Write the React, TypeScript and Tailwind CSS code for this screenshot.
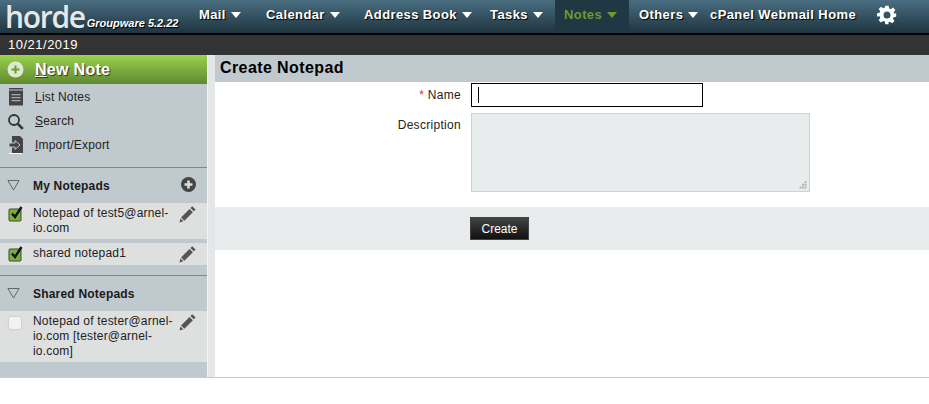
import React from "react";

const Caret = ({ className = "border-t-white" }: { className?: string }) => (
  <span className={`ml-[5px] inline-block w-0 h-0 border-x-[5.5px] border-x-transparent border-t-[6px] ${className}`} />
);

const NavItem = ({ label, width, active }: { label: string; width: string; active?: boolean }) => (
  <div
    className={`flex items-center h-full pb-[3px] ${width} ${active ? "bg-[#203843] pl-[9px] text-[#6a9a32]" : "text-white [text-shadow:1px_1px_1px_#000]"}`}
  >
    {label}
    <Caret className={active ? "border-t-[#6a9a32]" : "border-t-white"} />
  </div>
);

const Gear = () => (
  <svg width="20" height="20" viewBox="0 0 24 24" fill="#fff">
    <path
      fillRule="evenodd"
      d="M10 1h4l.6 3.2 1.9.8 2.7-1.9 2.8 2.8-1.9 2.7.8 1.9L23 10v4l-3.1.6-.8 1.9 1.9 2.7-2.8 2.8-2.7-1.9-1.9.8L13.9 23h-4l-.5-3.1-1.9-.8-2.7 1.9L2 18.2l1.9-2.7-.8-1.9L0 13.9v-4l3.1-.5.8-1.9L2 4.8 4.8 2l2.7 1.9 1.9-.8zM12 7.8a4.2 4.2 0 1 0 0 8.4 4.2 4.2 0 0 0 0-8.4z"
    />
  </svg>
);

const Pencil = () => (
  <svg width="18" height="18" viewBox="0 0 18 18" fill="#555">
    <path d="M13.2 1.2l3.4 3.2-1.8 1.9-3.4-3.3zM10.5 4l3.4 3.3-8.5 8.4-3.4-3.3zM1.4 13.4l3 2.9-3.9 1.1z" />
  </svg>
);

const Check = ({ checked }: { checked: boolean }) =>
  checked ? (
    <svg width="16" height="16" viewBox="0 0 16 16" className="shrink-0">
      <rect x="1" y="3" width="12" height="12" rx="1" fill="#7ab03c" stroke="#3d4a35" />
      <path d="M4 7.5l3 3.5 6.5-10" fill="none" stroke="#111" strokeWidth="2.4" />
    </svg>
  ) : (
    <span className="mt-[3px] ml-[1px] mr-[3px] block w-3 h-3 shrink-0 rounded-[2px] bg-[#f2f2f2] shadow-[0_0_2px_#aaa]" />
  );

const MenuRow = ({ hot, rest, icon }: { hot: string; rest: string; icon: React.ReactNode }) => (
  <div className="flex items-center h-6 text-[12px] tracking-[0.2px] text-[#222]">
    <div className="w-[35px] flex justify-center pr-[4px]">{icon}</div>
    <span>
      <span className="underline">{hot}</span>
      {rest}
    </span>
  </div>
);

const ListIcon = () => (
  <svg width="16" height="18" viewBox="0 0 16 18" fill="#444">
    <rect x="1" y="0" width="14" height="1.5" />
    <rect x="1" y="2.5" width="14" height="15" />
    <path d="M3.5 6h9v1.2h-9zM3.5 9h9v1.2h-9zM3.5 12h9v1.2h-9z" fill="#aaa" />
  </svg>
);

const SearchIcon = () => (
  <svg width="17" height="17" viewBox="0 0 17 17" fill="none" stroke="#333">
    <circle cx="7" cy="7" r="5" strokeWidth="1.8" />
    <path d="M10.8 10.8l5 5" strokeWidth="2.6" />
  </svg>
);

const ImportIcon = () => (
  <svg width="16" height="18" viewBox="0 0 16 18">
    <path d="M4 0h8l3 3v14H4z" fill="#444" />
    <path d="M1 7h6V4.5L12 9l-5 4.5V11H1z" fill="#444" stroke="#c0c9ce" />
    <rect x="1" y="17" width="13" height="1" fill="#fff" />
  </svg>
);

const SectionHead = ({ label, plus }: { label: string; plus?: boolean }) => (
  <div className="flex items-center h-[36px] border-t border-[#7d8a90] text-[12px] tracking-[0.2px] font-bold text-[#1a1a1a]">
    <div className="w-[33px] pl-[7px] pb-[1px]">
      <svg width="13" height="11" viewBox="0 0 13 11" fill="none" stroke="#666">
        <path d="M.9.5h11.2L6.5 10z" />
      </svg>
    </div>
    <span className="flex-1">{label}</span>
    {plus && (
      <svg width="15" height="15" viewBox="0 0 15 15" className="mr-[11px] mb-[2px]">
        <circle cx="7.5" cy="7.5" r="7.5" fill="#444" />
        <path d="M3.5 6.2h2.7V3.5h2.6v2.7h2.7v2.6H8.8v2.7H6.2V8.8H3.5z" fill="#ddd" />
      </svg>
    )}
  </div>
);

const NotepadRow = ({ text, checked, className }: { text: React.ReactNode; checked: boolean; className: string }) => (
  <div className={`flex bg-[#dedfdf] pl-[8px] pr-[10px] pt-[3px] text-[12px] tracking-[0.2px] leading-[15px] text-[#222] ${className}`}>
    <Check checked={checked} />
    <div className="ml-[9px] flex-1">{text}</div>
    <div className="w-[18px] shrink-0 -mt-px">
      <Pencil />
    </div>
  </div>
);

export default function App() {
  return (
    <div className="w-[929px] h-[404px] bg-white overflow-hidden font-['Liberation_Sans',Arial,sans-serif]">
      <header className="flex h-[33px] bg-gradient-to-b from-[#4a6f82] to-[#1f3540] text-[13px] tracking-[0.4px] font-bold">
        <div className="w-[199px] flex items-center tracking-normal">
          <span className="ml-[5px] text-[30px] leading-[33px] font-['Open_Sans',sans-serif] font-semibold text-[#e8e8e8] tracking-[-1.3px]">
            horde
          </span>
          <span className="ml-[2px] mt-[13px] text-[11px] leading-[12px] italic text-white [text-shadow:1px_1px_1px_#000]">
            Groupware 5.2.22
          </span>
        </div>
        <NavItem label="Mail" width="w-[67px]" />
        <NavItem label="Calendar" width="w-[98px]" />
        <NavItem label="Address Book" width="w-[126px]" />
        <NavItem label="Tasks" width="w-[65px]" />
        <NavItem label="Notes" width="w-[74px]" active />
        <div className="w-[10px]" />
        <NavItem label="Others" width="w-[71px]" />
        <div className="w-[167px] flex items-center pb-[3px] text-white [text-shadow:1px_1px_1px_#000]">
          cPanel Webmail Home
        </div>
        <div className="flex items-center pb-[3px]">
          <Gear />
        </div>
      </header>
      <div className="h-[22px] border-t-2 border-black bg-[#333333] pl-[8px] text-[13px] tracking-[0.5px] leading-[19px] text-white">
        10/21/2019
      </div>
      <div className="flex h-[323px] border-b border-[#c8cccf]">
        <aside className="w-[207px] bg-[#c0c9ce]">
          <div className="flex items-center h-[29px] bg-gradient-to-b from-[#9bd24f] to-[#5f8a30] pl-[7px] text-[16px] tracking-[0.3px] font-bold text-white [text-shadow:1px_1px_1px_#333]">
            <svg width="17" height="17" viewBox="0 0 17 17">
              <circle cx="8.5" cy="8.5" r="8" fill="#dfe8d0" />
              <path d="M4.5 7.5h3v-3h2v3h3v2h-3v3h-2v-3h-3z" fill="#6d9c35" />
            </svg>
            <span className="ml-[11px]">
              <span className="underline">N</span>ew Note
            </span>
          </div>
          <div className="pb-[10px] pt-px">
            <MenuRow hot="L" rest="ist Notes" icon={<ListIcon />} />
            <MenuRow hot="S" rest="earch" icon={<SearchIcon />} />
            <MenuRow hot="I" rest="mport/Export" icon={<ImportIcon />} />
          </div>
          <SectionHead label="My Notepads" plus />
          <NotepadRow checked className="h-[36px]" text="Notepad of test5@arnel-io.com" />
          <div className="h-[4px]" />
          <NotepadRow checked className="h-[22px]" text="shared notepad1" />
          <div className="h-[10px]" />
          <SectionHead label="Shared Notepads" />
          <NotepadRow
            checked={false}
            className="h-[51px]"
            text="Notepad of tester@arnel-io.com [tester@arnel-io.com]"
          />
        </aside>
        <div className="w-[8px] bg-[#e4e6e7] border-l border-[#f4f4f4]" />
        <main className="flex-1">
          <h1 className="h-[27px] bg-[#c0c9ce] pl-[5px] text-[16px] tracking-[0.4px] font-bold leading-[26px] text-black">
            Create Notepad
          </h1>
          <div className="flex pt-px text-[12px] tracking-[0.3px] text-[#222]">
            <div className="w-[256px] h-[24px] pr-[10px] text-right leading-[24px]">
              <span className="text-[#ff2020]">*</span> Name
            </div>
            <div className="w-[232px] h-[24px] border border-black bg-white pl-[6px] pt-[3px]">
              <div className="w-px h-[16px] bg-black" />
            </div>
          </div>
          <div className="flex pt-[6px] text-[12px] tracking-[0.3px] text-[#222]">
            <div className="w-[256px] pr-[10px] text-right leading-[24px]">Description</div>
            <div className="relative w-[339px] h-[79px] border border-[#cfd2d3] bg-[#e9eced]">
              <svg width="8" height="8" viewBox="0 0 8 8" fill="#b5b8b9" className="absolute right-[2px] bottom-[2px]">
                <path d="M5.5 0h2v2h-2zM3 2.7h2v2H3zM5.5 2.7h2v2h-2zM.5 5.5h2v2h-2zM3 5.5h2v2H3zM5.5 5.5h2v2h-2z" />
              </svg>
            </div>
          </div>
          <div className="mt-[15px] h-[43px] bg-[#e9eced] pl-[255px] pt-[10px]">
            <div className="flex items-center justify-center w-[59px] h-[23px] border border-[#444] bg-gradient-to-b from-[#444] to-[#111] text-[12px] text-white">
              Create
            </div>
          </div>
        </main>
      </div>
    </div>
  );
}
